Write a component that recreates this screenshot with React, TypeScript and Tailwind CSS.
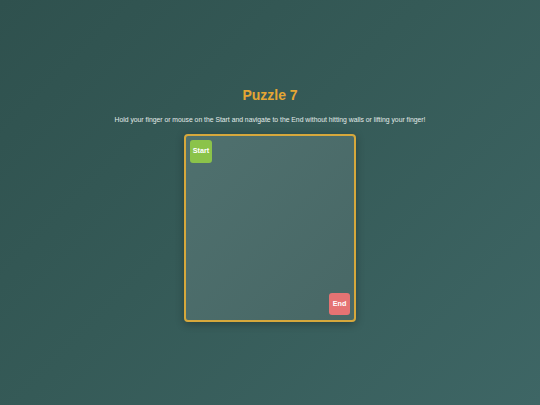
export default function App() {
  return (
    <div
      className="w-[540px] h-[405px] flex flex-col items-center bg-[linear-gradient(135deg,#2f514e_0%,#355a57_45%,#3e6665_100%)]"
      style={{ fontFamily: '"Liberation Sans", Arial, sans-serif' }}
    >
      <h1 className="mt-[86px] text-[14px] leading-[18px] font-bold text-[#e5a634]">Puzzle 7</h1>
      <p className="mt-[12px] text-[6.8px] leading-[8px] text-[#e3ebe9]">
        Hold your finger or mouse on the Start and navigate to the End without hitting walls or lifting your finger!
      </p>
      <div className="mt-[10px] w-[172px] h-[188px] rounded-[4px] border-2 border-[#d6a83c] bg-[linear-gradient(135deg,#4f706e,#486866)] shadow-[0_2px_8px_rgba(0,0,0,0.3)] p-[4px] pb-[5px] flex flex-col justify-between">
        <div className="w-[22px] h-[23px] rounded-[3px] bg-[#8bc34a] flex items-center justify-center text-white font-bold text-[7.2px]">
          Start
        </div>
        <div className="self-end w-[21px] h-[22px] rounded-[3px] bg-[#e57373] flex items-center justify-center text-white font-bold text-[7.2px]">
          End
        </div>
      </div>
    </div>
  );
}
